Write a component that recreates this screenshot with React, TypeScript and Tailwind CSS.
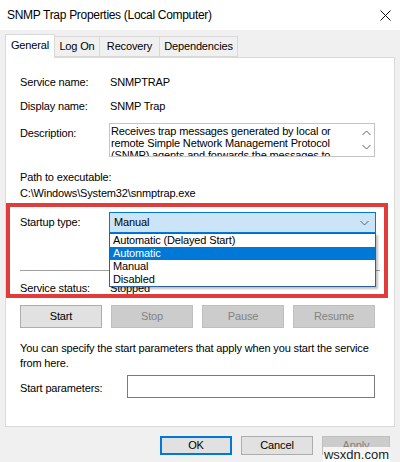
const Chevron = ({ up = false }: { up?: boolean }) => (
  <svg width="9" height="6" viewBox="0 0 9 6" className="block">
    <path
      d={up ? "M0.5 5 L4.5 1 L8.5 5" : "M0.5 1 L4.5 5 L8.5 1"}
      fill="none"
      stroke="#606060"
      strokeWidth="1"
    />
  </svg>
);

const PushButton = ({ label, disabled = false }: { label: string; disabled?: boolean }) => (
  <div
    className={
      disabled
        ? "h-[23px] flex items-center justify-center bg-[#cccccc] border border-[#bfbfbf] text-[#838383]"
        : "h-[23px] flex items-center justify-center bg-[#e1e1e1] border border-[#adadad] text-black"
    }
  >
    {label}
  </div>
);

export default function App() {
  return (
    <div className="w-[400px] h-[462px] bg-[#f0f0f0] flex flex-col overflow-hidden relative text-[11px] leading-[15px] tracking-[-0.15px] text-black font-['Liberation_Sans',Arial,sans-serif]">
      {/* title bar */}
      <div className="h-[30px] bg-white flex items-center justify-between pl-[7px] pr-[9px] shrink-0">
        <span className="text-[12px] tracking-[-0.3px]">SNMP Trap Properties (Local Computer)</span>
        <svg width="11" height="11" viewBox="0 0 11 11">
          <path d="M0.5 0.5 L10.5 10.5 M10.5 0.5 L0.5 10.5" stroke="#111" strokeWidth="1" />
        </svg>
      </div>

      {/* tabs */}
      <div className="mt-[4px] px-[5px] flex items-end h-[23px] shrink-0 relative z-10">
        <div className="w-[50px] h-[24px] -mb-[1px] pb-[2px] bg-white border border-b-0 border-[#d9d9d9] flex items-center justify-center">
          General
        </div>
        <div className="w-[45px] h-[21px] border border-l-0 border-[#d9d9d9] flex items-center justify-center">
          Log On
        </div>
        <div className="w-[60px] h-[21px] border border-l-0 border-[#d9d9d9] flex items-center justify-center">
          Recovery
        </div>
        <div className="w-[78px] h-[21px] border border-l-0 border-[#d9d9d9] flex items-center justify-center">
          Dependencies
        </div>
      </div>

      {/* panel */}
      <div className="mx-[5px] h-[370px] bg-white border border-[#d9d9d9] px-[14px] flex flex-col relative shrink-0">
        <div className="mt-[17px] flex">
          <span className="w-[90px]">Service name:</span>
          <span>SNMPTRAP</span>
        </div>
        <div className="mt-[9px] flex">
          <span className="w-[90px]">Display name:</span>
          <span>SNMP Trap</span>
        </div>
        <div className="mt-[9px] flex">
          <span className="w-[89px] pt-[3px]">Description:</span>
          <div className="w-[266px] h-[34px] border border-[#c4c4c4] flex overflow-hidden">
            <p className="flex-1 pl-[1px] pr-[12px] pt-[1px] leading-[12px]">
              Receives trap messages generated by local or remote Simple Network Management Protocol (SNMP)
              agents and forwards the messages to trap monitoring programs.
            </p>
            <div className="w-[16px] flex flex-col items-center justify-between py-[6px]">
              <Chevron up />
              <Chevron />
            </div>
          </div>
        </div>
        <div className="mt-[13px]">Path to executable:</div>
        <div className="mt-[1px]">C:\Windows\System32\snmptrap.exe</div>

        <div className="mt-[11px] flex items-center">
          <span className="w-[89px]">Startup type:</span>
          <div className="relative w-[267px]">
            <div className="h-[21px] bg-[#cce4f7] border border-[#0078d7] flex items-center justify-between pl-[4px] pr-[6px]">
              <span>Manual</span>
              <Chevron />
            </div>
            {/* open list */}
            <div className="absolute left-0 top-full w-full bg-white border border-[#2f5f98] shadow-[2px_2px_2px_rgba(0,0,0,0.25)] z-20 leading-[13px]">
              <div className="pl-[3px]">Automatic (Delayed Start)</div>
              <div className="pl-[3px] bg-[#0078d7] text-white">Automatic</div>
              <div className="pl-[3px]">Manual</div>
              <div className="pl-[3px]">Disabled</div>
            </div>
          </div>
        </div>

        <div className="mt-[37px] h-px bg-[#a0a0a0]" />

        <div className="mt-[10px] flex">
          <span className="w-[90px]">Service status:</span>
          <span>Stopped</span>
        </div>

        <div className="mt-[9px] w-[355px] grid grid-cols-4 gap-[9px]">
          <PushButton label="Start" />
          <PushButton label="Stop" disabled />
          <PushButton label="Pause" disabled />
          <PushButton label="Resume" disabled />
        </div>

        <p className="mt-[13px] w-[360px]">
          You can specify the start parameters that apply when you start the service from here.
        </p>

        <div className="mt-[4px] flex items-center">
          <span className="w-[107px] pt-[3px]">Start parameters:</span>
          <div className="w-[248px] h-[23px] border border-[#7a7a7a] bg-white" />
        </div>

        {/* annotation box */}
        <div className="absolute left-0 top-[145px] w-[382px] h-[95px] border-[4px] border-[#e03c3c] z-30 pointer-events-none" />
      </div>

      {/* dialog buttons */}
      <div className="mt-[9px] flex justify-end gap-[9px] pr-[10px]">
        <div className="w-[72px] h-[19px] flex items-center justify-center bg-[#e1e1e1] border-2 border-[#0078d7]">
          OK
        </div>
        <div className="w-[72px] h-[19px] flex items-center justify-center bg-[#e1e1e1] border border-[#adadad]">
          Cancel
        </div>
        <div className="w-[68px] h-[19px] flex items-center justify-center bg-[#cccccc] border border-[#bfbfbf] text-[#838383]">
          Apply
        </div>
      </div>

      <span className="absolute right-[10px] bottom-0 h-[15px] px-[1px] bg-white/80 text-[13px] leading-[15px] tracking-normal text-[#222]">
        wsxdn.com
      </span>
    </div>
  );
}
